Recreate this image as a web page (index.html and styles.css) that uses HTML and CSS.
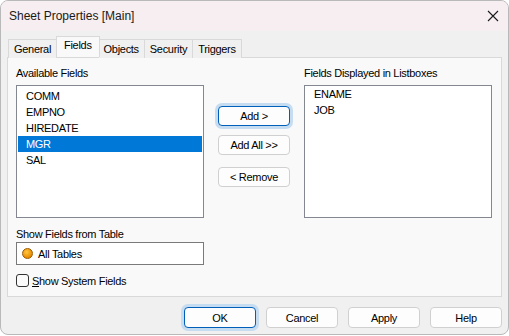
FILE: index.html
```html
<!DOCTYPE html>
<html lang="en">
<head>
  <meta charset="UTF-8" />
  <title>Sheet Properties [Main]</title>
  <link rel="stylesheet" href="styles.css">
</head>
<body>
  <div class="dialog">
    <!-- Title bar -->
    <div class="titlebar">
      <span class="title">Sheet Properties [Main]</span>
      <svg class="close" width="12" height="12" viewBox="0 0 12 12">
        <path d="M1 1 L11 11 M11 1 L1 11" stroke="#1a1a1a" stroke-width="1.1" fill="none"/>
      </svg>
    </div>

    <div class="content">
      <!-- Tabs -->
      <div class="tabs">
        <div class="tab">General</div>
        <div class="tab active">Fields</div>
        <div class="tab">Objects</div>
        <div class="tab">Security</div>
        <div class="tab">Triggers</div>
      </div>

      <div class="panel">
        <div class="fields-grid">
          <div class="label">Available Fields</div>
          <div></div>
          <div class="label">Fields Displayed in Listboxes</div>

          <div class="listbox">
            <div class="item">COMM</div>
            <div class="item">EMPNO</div>
            <div class="item">HIREDATE</div>
            <div class="item selected">MGR</div>
            <div class="item">SAL</div>
          </div>

          <div class="mid-buttons">
            <button class="btn focused add">Add &gt;</button>
            <button class="btn addall">Add All &gt;&gt;</button>
            <button class="btn remove">&lt; Remove</button>
          </div>

          <div class="listbox right">
            <div class="item">ENAME</div>
            <div class="item">JOB</div>
          </div>
        </div>

        <div class="label table-label">Show Fields from Table</div>
        <div class="table-box">
          <span class="dot"></span>
          <span>All Tables</span>
        </div>

        <label class="check">
          <span class="checkbox"></span>
          <span><u>S</u>how System Fields</span>
        </label>
      </div>

      <!-- Footer buttons -->
      <div class="footer">
        <button class="btn focused">OK</button>
        <button class="btn">Cancel</button>
        <button class="btn">Apply</button>
        <button class="btn">Help</button>
      </div>
    </div>
  </div>
</body>
</html>
```

FILE: styles.css
```css
body {
  margin: 0;
  background: #ffffff;
  font-family: 'Liberation Sans', Arial, sans-serif;
  font-size: 11px;
  letter-spacing: -0.3px;
  color: #000;
}

/* --- Dialog window --- */
.dialog {
  width: 509px;
  height: 335px;
  box-sizing: border-box;
  border: 1px solid #b9b9b9;
  border-radius: 8px;
  overflow: hidden;
  background: #f0f0f0;
}
.titlebar {
  height: 30px;
  background: #f6eef0;
  display: flex;
  align-items: center;
  justify-content: space-between;
  padding: 0 8px 0 8px;
}
.title {
  font-size: 12px;
  letter-spacing: 0;
  color: #1a1a1a;
}
.close { margin-right: 1px; }

.content {
  padding: 7px 6px 0 6px;
}

/* --- Tabs --- */
.tabs {
  display: flex;
  height: 19px;
  padding-left: 1px;
  position: relative;
  z-index: 1;
}
.tab {
  height: 18px;
  margin-top: 1px;
  padding: 0 5px;
  line-height: 19px;
  border: 1px solid #d9d9d9;
  border-bottom: none;
  border-left: none;
  background: #f0f0f0;
}
.tab:first-child { border-left: 1px solid #d9d9d9; }
.tab.active {
  background: #f9f9f9;
  height: 20px;
  margin-top: -2px;
  line-height: 17px;
  padding: 0 7px;
  border-left: 1px solid #d9d9d9;
  margin-left: -1px;
  margin-right: -1px;
  border-right: 1px solid #d9d9d9;
  z-index: 2;
  position: relative;
}
.tab.active + .tab { border-left: none; }

.panel {
  height: 240px;
  box-sizing: border-box;
  border: 1px solid #d9d9d9;
  background: #f9f9f9;
  padding: 8px 8px 0 8px;
}

/* --- Fields grid --- */
.fields-grid {
  display: grid;
  grid-template-columns: 188px 72px 188px;
  column-gap: 14px;
}
.label {
  height: 14px;
  line-height: 14px;
  margin-bottom: 5px;
}
.listbox {
  height: 133px;
  box-sizing: border-box;
  border: 1px solid #828790;
  background: #fff;
  padding: 2px 1px;
}
.listbox.right { padding-top: 0; }
.item {
  height: 16px;
  line-height: 16px;
  padding-left: 8px;
}
.item.selected {
  background: #0078d7;
  color: #fff;
}

.mid-buttons {
  display: flex;
  flex-direction: column;
  padding-top: 21px;
}
.btn {
  width: 72px;
  height: 20px;
  box-sizing: border-box;
  border: 1px solid #d0d0d0;
  border-radius: 4px;
  background: #fdfdfd;
  font-family: inherit;
  font-size: 11px;
  letter-spacing: -0.3px;
  color: #000;
  padding: 0;
}
.btn.focused {
  border-color: #005fb8;
  box-shadow: 0 0 0 3px #c6dcf0;
}
.addall { margin-top: 9px; }
.remove { margin-top: 12px; }

/* --- Table selector --- */
.table-label {
  margin-top: 9px;
  margin-bottom: 1px;
}
.table-box {
  width: 188px;
  height: 23px;
  box-sizing: border-box;
  border: 1px solid #7a7a7a;
  background: #fff;
  display: flex;
  align-items: center;
  gap: 5px;
  padding-left: 5px;
}
.dot {
  width: 9px;
  height: 9px;
  border-radius: 50%;
  border: 1px solid #9a5a00;
  background: radial-gradient(circle at 40% 35%, #ffc840, #e88a00 70%);
}

.check {
  display: flex;
  align-items: center;
  gap: 3px;
  margin-top: 9px;
}
.checkbox {
  width: 11px;
  height: 11px;
  border: 1px solid #333;
  border-radius: 3px;
  background: #fbfbfb;
}

/* --- Footer --- */
.footer {
  display: flex;
  justify-content: flex-end;
  gap: 10px;
  padding: 10px 0 0 0;
}
.footer .btn { height: 21px; }
```
